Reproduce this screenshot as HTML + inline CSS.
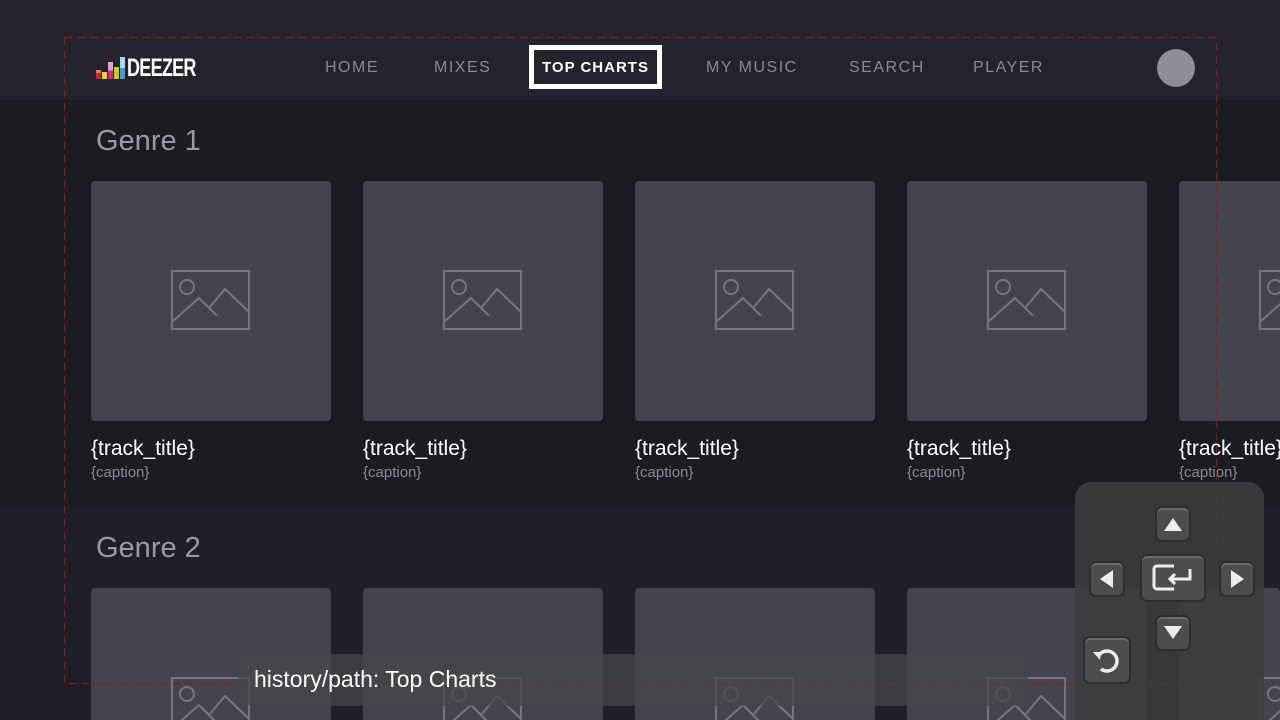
<!DOCTYPE html>
<html><head><style>
*{margin:0;padding:0;box-sizing:border-box}
html,body{width:1280px;height:720px;overflow:hidden}
body{background:#1b1b22;font-family:"Liberation Sans",sans-serif;position:relative}
.hdr{position:absolute;left:0;top:0;width:1280px;height:100px;background:#23232b}
.row2{position:absolute;left:0;top:507px;width:1280px;height:213px;background:#1f1f27}
.nav{position:absolute;top:59px;font-size:16px;letter-spacing:1.5px;color:#8a8a93}
.sel{position:absolute;left:529px;top:45px;width:133px;height:44px;border:5px solid #fff;background:#23232b;color:#fff;font-weight:bold;font-size:15px;letter-spacing:1px;text-align:center;line-height:36px}
.av{position:absolute;left:1157px;top:49px;width:38px;height:38px;border-radius:50%;background:#8e8e96}
.g{position:absolute;left:96px;font-size:29px;color:#9a9aa2}
.card{position:absolute;width:240px;height:240px;background:#44444d;border-radius:4px;overflow:hidden}
.r2 .card{height:132px;border-radius:4px 4px 0 0}
.card svg{position:absolute;left:80px;top:89px}
.t{position:absolute;font-size:21px;color:#fff}
.c{position:absolute;font-size:15px;color:#8a8a93}
.dash{position:absolute;left:0;top:0}
.hist{position:absolute;left:238px;top:654px;width:790px;height:52px;background:rgba(70,70,74,.75);border-radius:14px;color:#fff;font-size:23px;padding:12px 16px}
.pad{position:absolute;left:1075px;top:482px;width:189px;height:238px;background:rgba(62,62,64,.88);border-radius:16px 16px 0 0}
.b{position:absolute;background:#4d4d50;border:2px solid #2e2e30;border-radius:7px;box-shadow:inset 0 2px 0 #6a6a6c}
</style></head><body>
<div class="hdr"></div>
<div class="row2"></div>
<div style="position:absolute;left:96px;top:57px;display:flex;align-items:flex-end;gap:1px">
<div style="width:5px;height:9px;background:linear-gradient(#e87a70 33%,#d8222a 33%)"></div><div style="width:5px;height:7px;background:#e8e000"></div><div style="width:5px;height:17px;background:linear-gradient(#e8a0c8 50%,#e0208a 50%)"></div><div style="width:5px;height:12px;background:#c8d000"></div><div style="width:5px;height:22px;background:linear-gradient(#a8d8f0 50%,#3aa0d8 50%)"></div>
<span style="color:#fff;font-weight:bold;font-size:25px;line-height:22px;letter-spacing:-1px;display:inline-block;transform:scaleX(.72);transform-origin:left;margin-left:1px">DEEZER</span></div>
<div class="nav" style="left:325px">HOME</div>
<div class="nav" style="left:434px">MIXES</div>
<div class="sel">TOP CHARTS</div>
<div class="nav" style="left:706px">MY MUSIC</div>
<div class="nav" style="left:849px">SEARCH</div>
<div class="nav" style="left:973px">PLAYER</div>
<div class="av"></div>
<div class="g" style="top:125px">Genre 1</div>
<div class="g" style="top:532px">Genre 2</div>
<div class="card" style="left:91px;top:181px"><svg width="80" height="60" viewBox="172 271 80 60" fill="none" stroke="#76767e" stroke-width="2"><rect x="173" y="272" width="77" height="58"/><circle cx="188" cy="288" r="7"/><path d="M173 323L200 299L218 317M210 309L226 290L250 313"/></svg></div>
<div class="card" style="left:363px;top:181px"><svg width="80" height="60" viewBox="172 271 80 60" fill="none" stroke="#76767e" stroke-width="2"><rect x="173" y="272" width="77" height="58"/><circle cx="188" cy="288" r="7"/><path d="M173 323L200 299L218 317M210 309L226 290L250 313"/></svg></div>
<div class="card" style="left:635px;top:181px"><svg width="80" height="60" viewBox="172 271 80 60" fill="none" stroke="#76767e" stroke-width="2"><rect x="173" y="272" width="77" height="58"/><circle cx="188" cy="288" r="7"/><path d="M173 323L200 299L218 317M210 309L226 290L250 313"/></svg></div>
<div class="card" style="left:907px;top:181px"><svg width="80" height="60" viewBox="172 271 80 60" fill="none" stroke="#76767e" stroke-width="2"><rect x="173" y="272" width="77" height="58"/><circle cx="188" cy="288" r="7"/><path d="M173 323L200 299L218 317M210 309L226 290L250 313"/></svg></div>
<div class="card" style="left:1179px;top:181px;width:101px;border-radius:4px 0 0 4px"><svg width="80" height="60" viewBox="172 271 80 60" fill="none" stroke="#76767e" stroke-width="2"><rect x="173" y="272" width="77" height="58"/><circle cx="188" cy="288" r="7"/><path d="M173 323L200 299L218 317M210 309L226 290L250 313"/></svg></div>
<div class="t" style="left:91px;top:437px">{track_title}</div><div class="c" style="left:91px;top:464px">{caption}</div>
<div class="t" style="left:363px;top:437px">{track_title}</div><div class="c" style="left:363px;top:464px">{caption}</div>
<div class="t" style="left:635px;top:437px">{track_title}</div><div class="c" style="left:635px;top:464px">{caption}</div>
<div class="t" style="left:907px;top:437px">{track_title}</div><div class="c" style="left:907px;top:464px">{caption}</div>
<div class="t" style="left:1179px;top:437px;width:101px;overflow:hidden;white-space:nowrap">{track_title}</div><div class="c" style="left:1179px;top:464px">{caption}</div>
<div class="r2">
<div class="card" style="left:91px;top:588px"><svg width="80" height="60" viewBox="172 271 80 60" fill="none" stroke="#76767e" stroke-width="2"><rect x="173" y="272" width="77" height="58"/><circle cx="188" cy="288" r="7"/><path d="M173 323L200 299L218 317M210 309L226 290L250 313"/></svg></div>
<div class="card" style="left:363px;top:588px"><svg width="80" height="60" viewBox="172 271 80 60" fill="none" stroke="#76767e" stroke-width="2"><rect x="173" y="272" width="77" height="58"/><circle cx="188" cy="288" r="7"/><path d="M173 323L200 299L218 317M210 309L226 290L250 313"/></svg></div>
<div class="card" style="left:635px;top:588px"><svg width="80" height="60" viewBox="172 271 80 60" fill="none" stroke="#76767e" stroke-width="2"><rect x="173" y="272" width="77" height="58"/><circle cx="188" cy="288" r="7"/><path d="M173 323L200 299L218 317M210 309L226 290L250 313"/></svg></div>
<div class="card" style="left:907px;top:588px"><svg width="80" height="60" viewBox="172 271 80 60" fill="none" stroke="#76767e" stroke-width="2"><rect x="173" y="272" width="77" height="58"/><circle cx="188" cy="288" r="7"/><path d="M173 323L200 299L218 317M210 309L226 290L250 313"/></svg></div>
<div class="card" style="left:1179px;top:588px;width:101px"><svg width="80" height="60" viewBox="172 271 80 60" fill="none" stroke="#76767e" stroke-width="2"><rect x="173" y="272" width="77" height="58"/><circle cx="188" cy="288" r="7"/><path d="M173 323L200 299L218 317M210 309L226 290L250 313"/></svg></div>
</div>
<svg class="dash" width="1280" height="720"><rect x="64.5" y="37.5" width="1152" height="646" fill="none" stroke="#8a1a22" stroke-width="1.3" stroke-dasharray="8 5"/></svg>
<div class="hist">history/path: Top Charts</div>
<div class="pad">
<div class="b" style="left:80px;top:24px;width:36px;height:36px"><svg width="32" height="32"><path d="M7 23L16 10L25 23Z" fill="#eee"/></svg></div>
<div class="b" style="left:14px;top:79px;width:36px;height:36px"><svg width="32" height="32"><path d="M22 7L9 16L22 25Z" fill="#eee"/></svg></div>
<div class="b" style="left:144px;top:79px;width:36px;height:36px"><svg width="32" height="32"><path d="M10 7L23 16L10 25Z" fill="#eee"/></svg></div>
<div class="b" style="left:80px;top:133px;width:36px;height:36px"><svg width="32" height="32"><path d="M7 9L25 9L16 22Z" fill="#eee"/></svg></div>
<div class="b" style="left:65px;top:72px;width:66px;height:48px"><svg width="62" height="44"><path d="M32 10H15a3 3 0 0 0-3 3v17a3 3 0 0 0 3 3h17" fill="none" stroke="#eee" stroke-width="3"/><path d="M48 13v10H28M33 18l-5 5 5 5" fill="none" stroke="#eee" stroke-width="3"/></svg></div>
<div class="b" style="left:8px;top:154px;width:48px;height:48px"><svg width="44" height="44"><path d="M14 17a10 10 0 1 1 2 14" fill="none" stroke="#eee" stroke-width="3.5"/><path d="M8 14l8 0 -1 8z" fill="#eee"/></svg></div>
</div>
</body></html>
